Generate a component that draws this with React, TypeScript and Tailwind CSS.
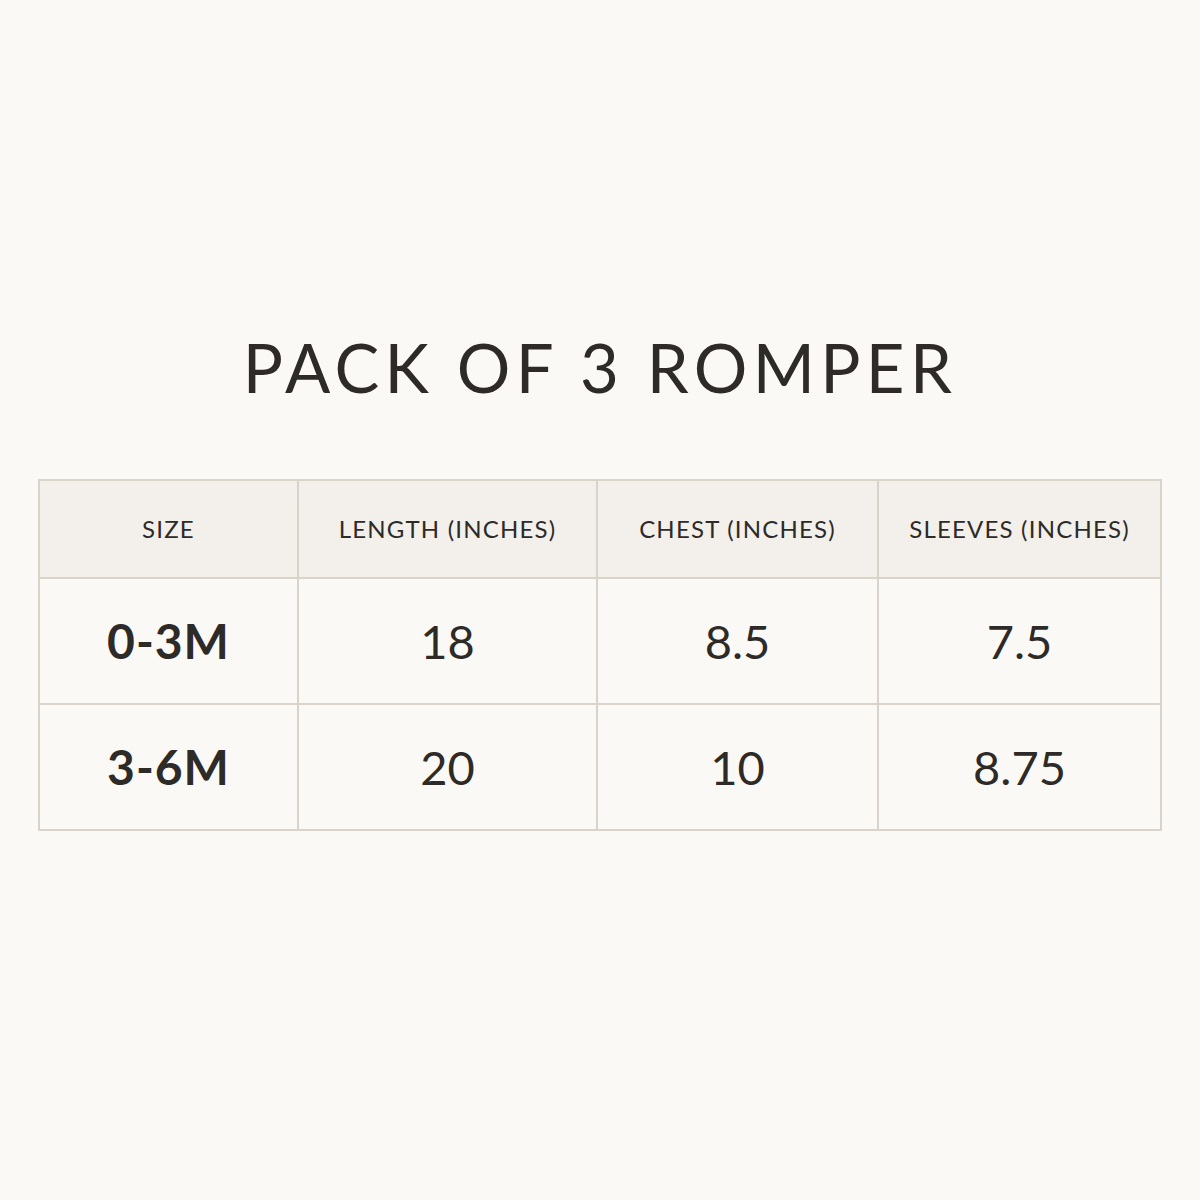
const headers = ['SIZE', 'LENGTH (INCHES)', 'CHEST (INCHES)', 'SLEEVES (INCHES)']

const rows = [
  { size: '0-3M', length: '18', chest: '8.5', sleeves: '7.5' },
  { size: '3-6M', length: '20', chest: '10', sleeves: '8.75' },
]

export default function App() {
  return (
    <div
      className="w-[1200px] h-[1200px] bg-[#fbf9f6] text-[#2d2a28] flex flex-col items-center"
      style={{ fontFamily: 'Lato, "Open Sans", sans-serif' }}
    >
      <h1 className="mt-[330px] text-[67px] leading-[74px] font-normal tracking-[0.08em]">
        PACK OF 3 ROMPER
      </h1>

      {/* Size table */}
      <table className="mt-[75px] w-[1122px] border-collapse border-2 border-[#dad3c9] table-fixed">
        <colgroup>
          <col className="w-[259px]" />
          <col className="w-[299px]" />
          <col className="w-[281px]" />
          <col className="w-[283px]" />
        </colgroup>
        <thead>
          <tr className="h-[98px] bg-[#f3f0eb]">
            {headers.map((h) => (
              <th
                key={h}
                className="border-2 border-[#dad3c9] text-[24px] font-normal tracking-[0.05em] text-center align-middle"
              >
                {h}
              </th>
            ))}
          </tr>
        </thead>
        <tbody>
          {rows.map((r) => (
            <tr key={r.size} className="h-[126px]">
              <td className="border-2 border-[#dad3c9] text-center text-[48px] font-bold tracking-[0.02em]">{r.size}</td>
              <td className="border-2 border-[#dad3c9] text-center text-[47px]">{r.length}</td>
              <td className="border-2 border-[#dad3c9] text-center text-[47px]">{r.chest}</td>
              <td className="border-2 border-[#dad3c9] text-center text-[47px]">{r.sleeves}</td>
            </tr>
          ))}
        </tbody>
      </table>
    </div>
  )
}
